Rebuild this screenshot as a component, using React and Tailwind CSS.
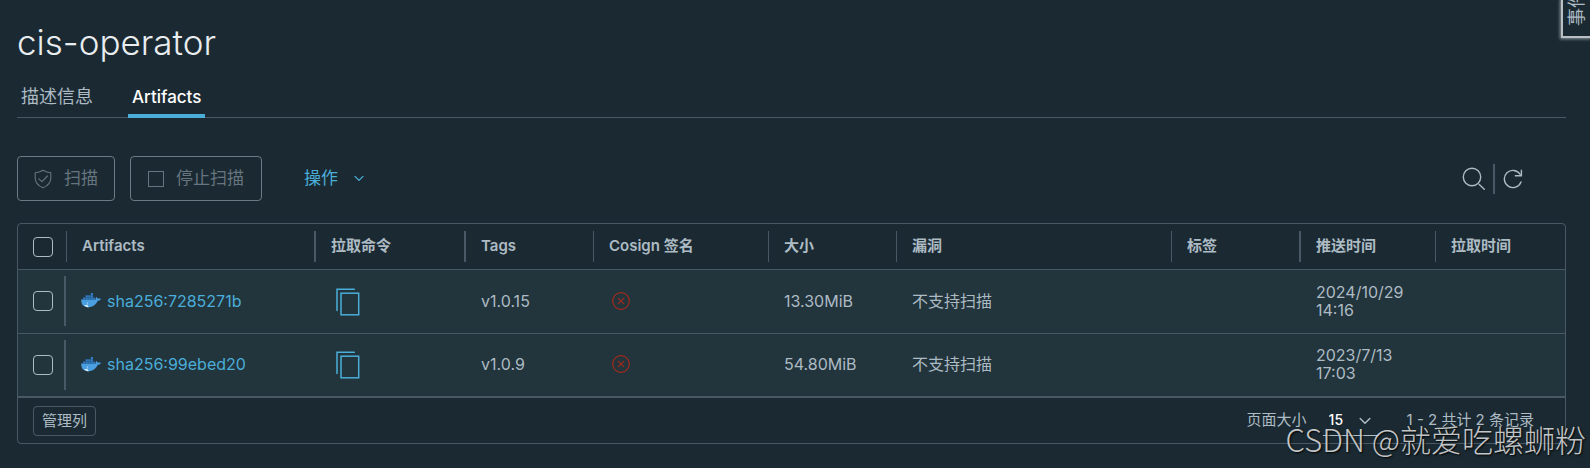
import React, { useState } from 'react';

const COLUMNS = [
  { label: 'Artifacts', width: 'w-[249px]', line: 'border-r-2' },
  { label: '拉取命令', width: 'w-[150px]', line: 'border-r-2' },
  { label: 'Tags', width: 'w-[128px]', line: 'border-r' },
  { label: 'Cosign 签名', width: 'w-[175px]', line: 'border-r' },
  { label: '大小', width: 'w-[128px]', line: 'border-r' },
  { label: '漏洞', width: '', line: 'border-r' },
  { label: '标签', width: 'w-[129px]', line: 'border-r-2' },
  { label: '推送时间', width: 'w-[135px]', line: 'border-r' },
  { label: '拉取时间', width: 'w-[129px]', line: '' },
];

const ARTIFACTS = [
  { id: 'sha256:7285271b', tag: 'v1.0.15', size: '13.30MiB', scan: '不支持扫描', date: '2024/10/29', time: '14:16' },
  { id: 'sha256:99ebed20', tag: 'v1.0.9', size: '54.80MiB', scan: '不支持扫描', date: '2023/7/13', time: '17:03' },
];

function ShieldCheckIcon() {
  return (
    <svg width="18" height="20" viewBox="0 0 18 20" fill="none" stroke="currentColor" strokeWidth="1.1" strokeLinejoin="round">
      <path d="M9 1.2C11.600 2.900 14 3.600 16.800 3.700V9c0 4.600-3 7.800-7.800 9.800C4.200 16.800 1.200 13.600 1.200 9V3.700C4 3.600 6.400 2.900 9 1.200Z" />
      <path d="M4.800 9.800 7.900 12.700 13.400 7" strokeLinecap="round" />
    </svg>
  );
}

function SquareIcon() {
  return (
    <svg width="16" height="16" viewBox="0 0 16 16" fill="none" stroke="currentColor">
      <rect x=".5" y=".5" width="15" height="15" />
    </svg>
  );
}

function ChevronIcon({ className }) {
  return (
    <svg className={className} viewBox="0 0 12 8" fill="none" stroke="currentColor" strokeWidth="1.5" strokeLinecap="round" strokeLinejoin="round">
      <path d="M1.200 1.500 6 6.300 10.800 1.500" />
    </svg>
  );
}

function SearchIcon() {
  return (
    <svg width="23" height="24" viewBox="0 0 23 24" fill="none" stroke="currentColor" strokeWidth="1.4" strokeLinecap="round">
      <circle cx="10" cy="10" r="8.700" />
      <path d="M17.300 17.500 22.300 22.300" />
    </svg>
  );
}

function RefreshIcon() {
  return (
    <svg width="20" height="20" viewBox="0 0 20 20" fill="none" stroke="currentColor" strokeWidth="1.4">
      <path d="M18 13A8.600 8.600 0 1 1 17.300 5.500" strokeLinecap="round" />
      <path d="M18.400 .8V6.800H11.800" />
    </svg>
  );
}

function CopyIcon() {
  return (
    <svg width="24" height="28" viewBox="0 0 24 28" fill="none" stroke="currentColor" strokeWidth="1.500">
      <rect x="5" y="5.200" width="17.700" height="21.600" />
      <path d="M1 22.500V1.200H18.300" strokeLinecap="round" />
    </svg>
  );
}

function UnsignedIcon() {
  return (
    <svg width="18" height="18" viewBox="0 0 18 18" fill="none" stroke="currentColor" strokeWidth="1.200">
      <circle cx="9" cy="9" r="8.300" />
      <path d="M5.800 5.800 12.200 12.200M12.200 5.800 5.800 12.200" />
    </svg>
  );
}

function DockerIcon() {
  return (
    <svg width="20" height="15" viewBox="0 0 20 15" className="shrink-0">
      <path
        fill="#4a9fe0"
        d="M.2 6.600H14.600C15 5.900 14.900 4.800 15.400 4C16.200 4.300 16.700 5 16.800 5.700C17.900 5.400 19 5.500 19.900 6C19.400 7.200 18.200 7.800 16.700 7.800C15 11.800 11.800 14.200 7 14.200C2.500 14.200 0 11.700 .2 6.600Z"
      />
      <path fill="#2f7cc4" d="M2 4.400h2.300v2H2zM4.600 4.400h2.300v2H4.600zM7.200 4.400h2.300v2H7.200zM9.800 4.400h2.300v2H9.800zM4.600 2.200h2.300v2H4.600zM7.200 2.200h2.300v2H7.200zM9.800 2.200h2.300v2H9.800zM9.800 0h2.300v2H9.800zM12.300 4.400h2v2h-2z" />
      <path fill="#d6ecf8" d="M3.200 11.900C4.400 12.100 5.600 11.900 6.600 11.400C6.600 12.700 7.200 13.600 8.200 14.200C6 14.300 4.300 13.500 3.200 11.900Z" />
      <circle cx="6.400" cy="10" r=".6" fill="#d6ecf8" />
    </svg>
  );
}

function Checkbox({ label, checked, onChange }) {
  return (
    <input
      type="checkbox"
      aria-label={label}
      checked={checked}
      onChange={onChange}
      className="block size-5 appearance-none rounded border border-[#adbbc4] checked:bg-[#4aaed9]"
    />
  );
}

export default function App() {
  const [selected, setSelected] = useState([]);
  const [pageSize, setPageSize] = useState('15');

  const toggle = (id) => {
    setSelected((prev) => (prev.includes(id) ? prev.filter((x) => x !== id) : [...prev, id]));
  };

  const toggleAll = () => {
    setSelected(selected.length === ARTIFACTS.length ? [] : ARTIFACTS.map((a) => a.id));
  };

  return (
    <div className="relative min-h-screen overflow-hidden bg-[#1b2a32] pt-[22px] pr-6 pl-[17px] font-['Inter','Noto_Sans_CJK_SC',sans-serif] text-base text-[#adbbc4]">
      <h1 className="text-[35px] leading-10 font-light text-[#eaedf0]">cis-operator</h1>

      {/* Tabs */}
      <nav className="mt-4 flex gap-[31px] border-b border-[#495865] leading-9">
        <a href="#summary" className="px-1 pt-px text-lg leading-9">描述信息</a>
        <a href="#artifacts" className="-mb-px h-10 border-b-4 border-[#4aaed9] px-1 pt-px text-[17px] leading-9 font-medium text-white">
          Artifacts
        </a>
      </nav>

      {/* Toolbar */}
      <div className="mt-[38px] flex items-center text-[17px]">
        <button disabled className="flex h-[45px] items-center gap-3 rounded border border-[#6b7a84] px-4 text-[#66757f]">
          <ShieldCheckIcon />
          扫描
        </button>
        <button disabled className="ml-[15px] flex h-[45px] items-center gap-3 rounded border border-[#6b7a84] px-[17px] text-[#66757f]">
          <SquareIcon />
          停止扫描
        </button>
        <button className="ml-[42px] flex items-center gap-4 text-[#4aaed9]">
          操作
          <ChevronIcon className="h-[7px] w-[10px]" />
        </button>
        <div className="mr-[43px] ml-auto flex items-center gap-2">
          <button aria-label="搜索"><SearchIcon /></button>
          <span className="h-[30px] w-[2px] bg-[#495865]" />
          <button aria-label="刷新"><RefreshIcon /></button>
        </div>
      </div>

      {/* Artifact list */}
      <div className="mt-[22px] overflow-hidden rounded border border-[#495865]">
        <table className="w-full table-fixed border-collapse text-left">
          <thead>
            <tr className="border-b border-[#495865]">
              <th className="w-[49px] py-[7px]">
                <div className="flex h-[31px] items-center border-r border-[#495865] pl-[15px]">
                  <Checkbox label="全选" checked={selected.length === ARTIFACTS.length} onChange={toggleAll} />
                </div>
              </th>
              {COLUMNS.map((col) => (
                <th key={col.label} className={`${col.width} py-[7px]`}>
                  <div className={`flex h-[31px] items-center border-[#495865] pl-[15px] text-[15px] font-semibold ${col.line}`}>
                    {col.label}
                  </div>
                </th>
              ))}
            </tr>
          </thead>
          <tbody className="bg-[#22343c]">
            {ARTIFACTS.map((item) => (
              <tr key={item.id} className="group border-b border-[#495865] last:border-b-2">
                <td className="pt-[6px] pr-px pb-[7px] group-last:pb-[6px]">
                  <div className="flex h-[50px] items-center border-r-2 border-[#495865] pl-[15px]">
                    <Checkbox label={item.id} checked={selected.includes(item.id)} onChange={() => toggle(item.id)} />
                  </div>
                </td>
                <td className="pb-[2px] pl-[14px]">
                  <a href={`#${item.id}`} className="flex items-center gap-[6px] text-[#4aaed9]">
                    <DockerIcon />
                    {item.id}
                  </a>
                </td>
                <td className="pl-5">
                  <button aria-label="复制拉取命令" className="block text-[#4aaed9]"><CopyIcon /></button>
                </td>
                <td className="pb-[2px] pl-[15px]">{item.tag}</td>
                <td className="pb-[2px] pl-[18px] text-[#a32b1c]"><UnsignedIcon /></td>
                <td className="pb-[2px] pl-[15px]">{item.size}</td>
                <td className="pb-[2px] pl-[15px]">{item.scan}</td>
                <td />
                <td className="pb-[2px] pl-[15px] leading-[18px]">
                  {item.date}
                  <br />
                  {item.time}
                </td>
                <td />
              </tr>
            ))}
          </tbody>
        </table>

        <div className="flex h-[45px] items-center px-[15px] text-[15px]">
          <button className="h-[30px] rounded border border-[#495865] px-2 leading-7 whitespace-nowrap">管理列</button>
          <label htmlFor="page-size" className="ml-auto">页面大小</label>
          <div className="relative ml-4 h-[30px] border-b border-[#adbbc4]">
            <select
              id="page-size"
              value={pageSize}
              onChange={(e) => setPageSize(e.target.value)}
              className="h-full w-14 appearance-none bg-transparent pl-[6px] text-sm font-medium text-white"
            >
              <option>15</option>
              <option>25</option>
              <option>50</option>
            </select>
            <ChevronIcon className="pointer-events-none absolute top-[11px] right-2 h-2 w-3" />
          </div>
          <span className="mr-4 ml-7">1 - 2 共计 2 条记录</span>
        </div>
      </div>

      {/* Event log drawer handle */}
      <button className="absolute top-0 right-0 h-[38px] w-[29px] overflow-hidden border-b-2 border-l-2 border-[#b9bfc3] bg-[#1b2a32] shadow-[0_0_3px_1px_#8b949a]">
        <span className="absolute right-[3px] bottom-[10px] rotate-180 text-lg leading-5 whitespace-nowrap [text-orientation:sideways] [writing-mode:vertical-rl]">
          事件
        </span>
      </button>

      <div className="pointer-events-none absolute right-1 bottom-[9px] font-['Noto_Sans_CJK_SC',sans-serif] text-[31px] leading-10 font-light text-white/75 [text-shadow:1px_1px_2px_#000000]">
        CSDN @就爱吃螺蛳粉
      </div>
    </div>
  );
}
